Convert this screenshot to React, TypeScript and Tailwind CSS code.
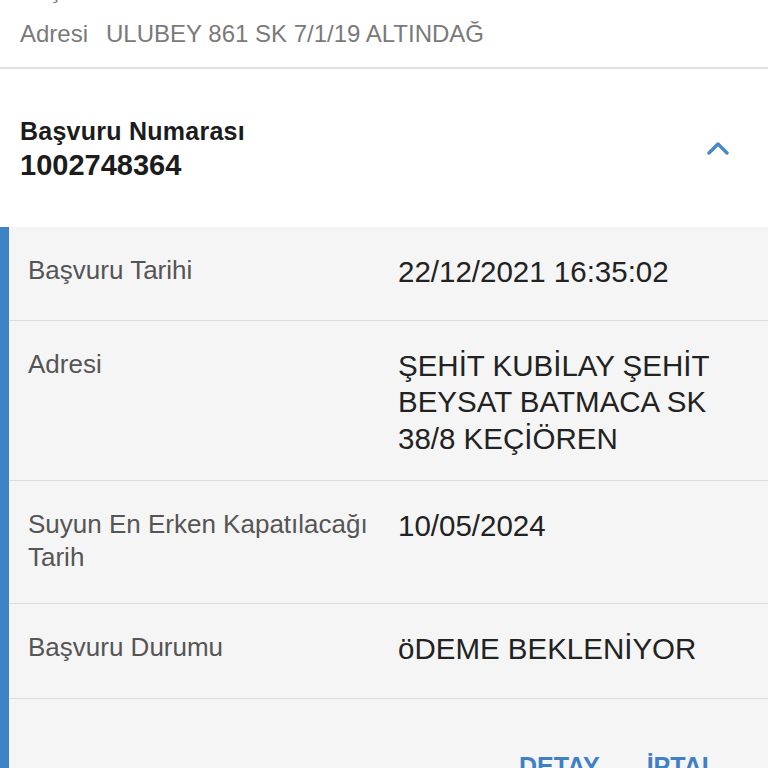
import React from "react";

const rows: { label: string; value: string; pb: string }[] = [
  { label: "Başvuru Tarihi", value: "22/12/2021 16:35:02", pb: "pb-[29px]" },
  { label: "Adresi", value: "ŞEHİT KUBİLAY ŞEHİT BEYSAT BATMACA SK 38/8 KEÇİÖREN", pb: "pb-[23px]" },
  { label: "Suyun En Erken Kapatılacağı Tarih", value: "10/05/2024", pb: "pb-[29px]" },
  { label: "Başvuru Durumu", value: "öDEME BEKLENİYOR", pb: "pb-[30px]" },
];

export default function App() {
  return (
    <div
      className="w-[768px] h-[768px] overflow-hidden bg-white"
      style={{ fontFamily: '"Liberation Sans", Arial, Helvetica, sans-serif' }}
    >
      {/* top previous card remainder */}
      <div className="flex flex-col border-b-2 border-[#e0e0e0] pl-5 h-[69px]">
        <div className="mt-[-24px] text-[24px] leading-[28px] text-[#7a7a7a]">Başvuru Tarihi</div>
        <div className="mt-4 flex text-[24px] leading-[28px] text-[#7a7a7a]">
          <span>Adresi</span>
          <span className="ml-[18px]">ULUBEY 861 SK 7/1/19 ALTINDAĞ</span>
        </div>
      </div>

      {/* header */}
      <div className="flex items-center justify-between pl-5 pr-[39px] h-[158px]">
        <div className="flex flex-col gap-[3px] pt-[2px]">
          <div className="text-[25px] leading-[28px] font-bold tracking-[0.01em] text-[#1c1c1c]">Başvuru Numarası</div>
          <div className="text-[29px] leading-[34px] font-bold text-[#1c1c1c]">1002748364</div>
        </div>
        <svg width="22" height="14" viewBox="0 0 22 14" fill="none">
          <path d="M2 12 L11 3 L20 12" stroke="#4a88c7" strokeWidth="3.4" strokeLinecap="round" strokeLinejoin="round" />
        </svg>
      </div>

      {/* details panel */}
      <div className="flex bg-[#f5f5f5]">
        <div className="w-[9px] shrink-0 bg-[#3d84c6]" />
        <div className="flex-1 flex flex-col">
          {rows.map((r) => (
            <div key={r.label} className={`flex border-b-[1.5px] border-[#dddddd] pt-[27px] ${r.pb}`}>
              <div className="w-[389px] shrink-0 pl-[19px] pr-4 text-[26px] leading-[33px] text-[#555555]">{r.label}</div>
              <div className="flex-1 pr-6 text-[29.5px] leading-[36.5px] text-[#222222]">{r.value}</div>
            </div>
          ))}
          <div className="flex justify-end gap-[47px] pr-[51px] pt-[53px] pb-6">
            <span className="text-[25px] leading-[28px] font-bold text-[#3f80c2]">DETAY</span>
            <span className="text-[25px] leading-[28px] font-bold text-[#3f80c2]">İPTAL</span>
          </div>
        </div>
      </div>
    </div>
  );
}
